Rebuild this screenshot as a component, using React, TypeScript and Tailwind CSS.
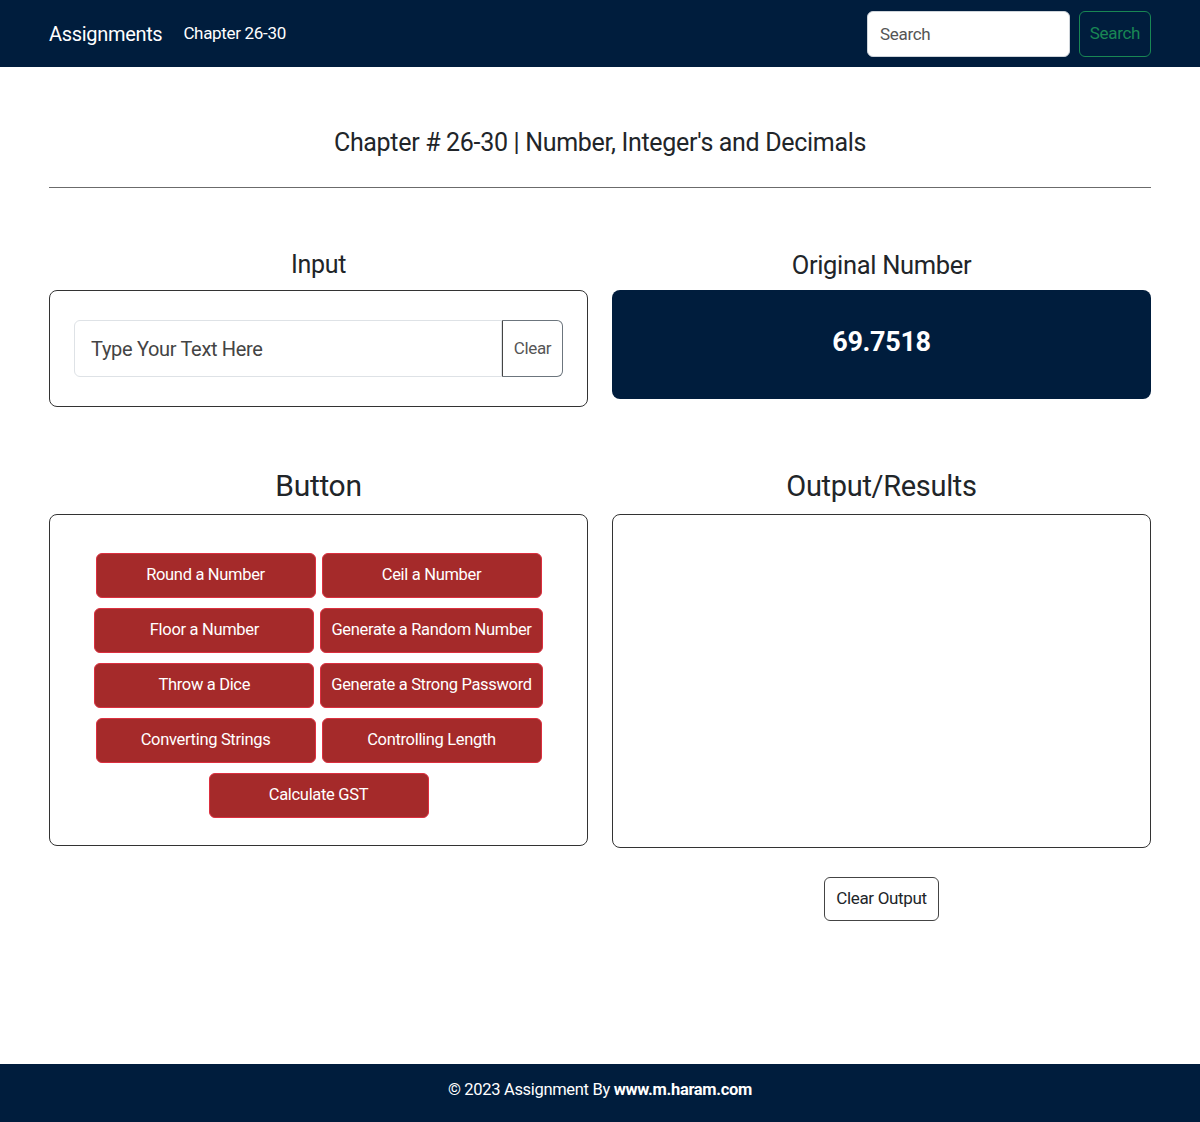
import React from 'react';

const rows: string[][] = [
  ['Round a Number', 'Ceil a Number'],
  ['Floor a Number', 'Generate a Random Number'],
  ['Throw a Dice', 'Generate a Strong Password'],
  ['Converting Strings', 'Controlling Length'],
  ['Calculate GST'],
];

function RedButton({ label }: { label: string }) {
  return (
    <button className="h-[45px] min-w-[220px] px-[10px] rounded-[6px] bg-[#a52a2a] border border-[#dc2f3f] text-white text-[16.5px]">
      {label}
    </button>
  );
}

export default function App() {
  return (
    <div className="min-h-[1122px] flex flex-col bg-white text-[#212529] font-['Roboto',sans-serif] tracking-[-0.02em]">
      <nav className="h-[67px] bg-[#001d3d] flex items-center px-[49px]">
        <span className="text-white text-[20px] mr-[21px]">Assignments</span>
        <span className="text-white text-[17px]">Chapter 26-30</span>
        <div className="ml-auto flex items-center gap-[9px]">
          <input
            placeholder="Search"
            className="w-[203px] h-[46px] rounded-[6px] bg-white px-3 text-[17px] placeholder:text-[#555] outline-none border border-[#ced4da]"
          />
          <button className="h-[46px] w-[72px] rounded-[6px] border border-[#198754] text-[#198754] text-[17px]">
            Search
          </button>
        </div>
      </nav>

      <main className="flex-1 px-[49px]">
        <h1 className="text-center text-[25px] mt-[57px] leading-[38px]">
          Chapter # 26-30 | Number, Integer's and Decimals
        </h1>
        <hr className="mt-[25px] border-t border-[#6b6b6b]" />

        <div className="grid grid-cols-2 gap-x-[24px] mt-[58px]">
          <div>
            <h2 className="text-center text-[25px] leading-[38px] mb-[6px]">Input</h2>
            <div className="h-[117px] border border-[#333] rounded-[8px] flex items-center px-[24px]">
              <div className="flex w-full h-[57px]">
                <input
                  placeholder="Type Your Text Here"
                  className="flex-1 min-w-0 border border-[#dee2e6] rounded-l-[6px] px-[16px] text-[20px] placeholder:text-[#444] outline-none"
                />
                <button className="w-[61px] border border-[#6c757d] border-l-[#444] rounded-r-[6px] text-[17px] text-[#555]">
                  Clear
                </button>
              </div>
            </div>
          </div>
          <div>
            <h2 className="text-center text-[25.5px] leading-[38px] mb-[6px]">Original Number</h2>
            <div className="h-[109px] bg-[#001d3d] rounded-[8px] flex items-center justify-center pb-[4px]">
              <span className="text-white text-[27px] font-bold">69.7518</span>
            </div>
          </div>
        </div>

        <div className="grid grid-cols-2 gap-x-[24px] mt-[58px]">
          <div>
            <h2 className="text-center text-[30px] leading-[42px] mb-[7px]">Button</h2>
            <div className="h-[332px] border border-[#333] rounded-[8px] flex flex-col items-center pt-[38px] gap-[10px]">
              {rows.map((row, i) => (
                <div key={i} className="flex justify-center gap-[6px]">
                  {row.map((b) => (
                    <RedButton key={b} label={b} />
                  ))}
                </div>
              ))}
            </div>
          </div>
          <div>
            <h2 className="text-center text-[29px] leading-[42px] mb-[7px]">Output/Results</h2>
            <div className="h-[334px] border border-[#333] rounded-[8px]" />
            <div className="flex justify-center mt-[29px]">
              <button className="h-[44px] w-[115px] border border-[#444] rounded-[6px] text-[17px]">
                Clear Output
              </button>
            </div>
          </div>
        </div>
      </main>

      <footer className="h-[58px] bg-[#001d3d] flex items-center justify-center pb-[5px] text-white text-[16.5px]">
        <span>
          © 2023 Assignment By <b>www.m.haram.com</b>
        </span>
      </footer>
    </div>
  );
}
